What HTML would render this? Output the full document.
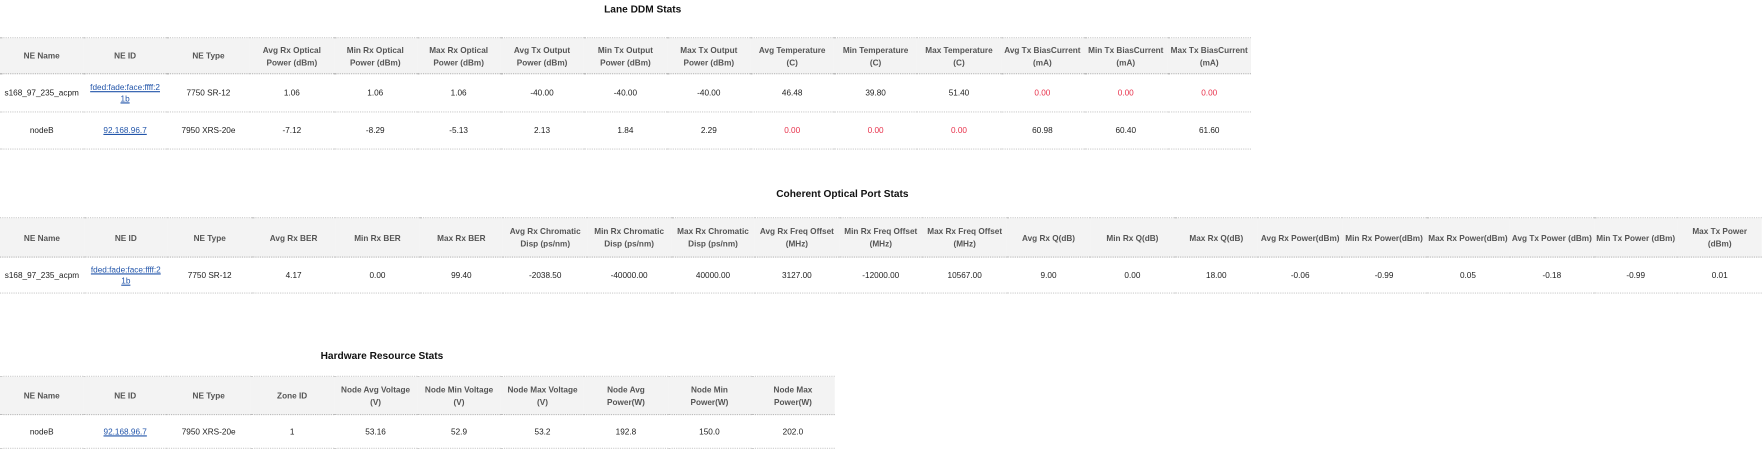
<!DOCTYPE html>
<html><head><meta charset="utf-8"><style>
body{margin:0;width:1764px;height:447px;background:#fff;font-family:"Liberation Sans",sans-serif;position:relative;overflow:hidden}
#w{position:absolute;left:0;top:0;width:1568px;height:398px;transform:scale(1.125);transform-origin:0 0}
.t{position:absolute;font-weight:bold;font-size:9px;color:#111}
table{position:absolute;border-collapse:collapse;table-layout:fixed;left:0}
th{background:#f3f3f3;color:#555;font-size:7.3px;font-weight:bold;text-align:center;line-height:11px;border-top:1px dotted #ccc;border-bottom:1px dotted #bbb;padding:0 1px}
td{font-size:7.3px;color:#222;text-align:center;border-bottom:1px dotted #ccc;line-height:10px;padding:0 1px}
td.r{color:#e8304a}
a{color:#2255aa;text-decoration:underline}
</style></head><body><div id="w">
<div class="t" style="left:537px;top:3px">Lane DDM Stats</div>
<table style="top:33px;width:1112px">
<tr style="height:32px"><th>NE Name</th><th>NE ID</th><th>NE Type</th><th>Avg Rx Optical Power (dBm)</th><th>Min Rx Optical Power (dBm)</th><th>Max Rx Optical Power (dBm)</th><th>Avg Tx Output Power (dBm)</th><th>Min Tx Output Power (dBm)</th><th>Max Tx Output Power (dBm)</th><th>Avg Temperature<br>(C)</th><th>Min Temperature<br>(C)</th><th>Max Temperature<br>(C)</th><th>Avg Tx BiasCurrent (mA)</th><th>Min Tx BiasCurrent (mA)</th><th>Max Tx BiasCurrent (mA)</th></tr>
<tr style="height:34px"><td>s168_97_235_acpm</td><td><a>fded:fade:face:ffff:2<br>1b</a></td><td>7750 SR-12</td><td>1.06</td><td>1.06</td><td>1.06</td><td>-40.00</td><td>-40.00</td><td>-40.00</td><td>46.48</td><td>39.80</td><td>51.40</td><td class="r">0.00</td><td class="r">0.00</td><td class="r">0.00</td></tr>
<tr style="height:33px"><td>nodeB</td><td><a>92.168.96.7</a></td><td>7950 XRS-20e</td><td>-7.12</td><td>-8.29</td><td>-5.13</td><td>2.13</td><td>1.84</td><td>2.29</td><td class="r">0.00</td><td class="r">0.00</td><td class="r">0.00</td><td>60.98</td><td>60.40</td><td>61.60</td></tr>
</table>
<div class="t" style="left:690px;top:167px">Coherent Optical Port Stats</div>
<table style="top:193px;width:1566px">
<tr style="height:35px"><th>NE Name</th><th>NE ID</th><th>NE Type</th><th>Avg Rx BER</th><th>Min Rx BER</th><th>Max Rx BER</th><th>Avg Rx Chromatic Disp (ps/nm)</th><th>Min Rx Chromatic Disp (ps/nm)</th><th>Max Rx Chromatic Disp (ps/nm)</th><th>Avg Rx Freq Offset (MHz)</th><th>Min Rx Freq Offset (MHz)</th><th>Max Rx Freq Offset (MHz)</th><th>Avg Rx Q(dB)</th><th>Min Rx Q(dB)</th><th>Max Rx Q(dB)</th><th>Avg Rx Power(dBm)</th><th>Min Rx Power(dBm)</th><th>Max Rx Power(dBm)</th><th>Avg Tx Power (dBm)</th><th>Min Tx Power (dBm)</th><th>Max Tx Power<br>(dBm)</th></tr>
<tr style="height:32px"><td>s168_97_235_acpm</td><td><a>fded:fade:face:ffff:2<br>1b</a></td><td>7750 SR-12</td><td>4.17</td><td>0.00</td><td>99.40</td><td>-2038.50</td><td>-40000.00</td><td>40000.00</td><td>3127.00</td><td>-12000.00</td><td>10567.00</td><td>9.00</td><td>0.00</td><td>18.00</td><td>-0.06</td><td>-0.99</td><td>0.05</td><td>-0.18</td><td>-0.99</td><td>0.01</td></tr>
</table>
<div class="t" style="left:285px;top:311px">Hardware Resource Stats</div>
<table style="top:334px;width:742px">
<tr style="height:34px"><th>NE Name</th><th>NE ID</th><th>NE Type</th><th>Zone ID</th><th>Node Avg Voltage (V)</th><th>Node Min Voltage (V)</th><th>Node Max Voltage (V)</th><th>Node Avg<br>Power(W)</th><th>Node Min<br>Power(W)</th><th>Node Max<br>Power(W)</th></tr>
<tr style="height:30px"><td>nodeB</td><td><a>92.168.96.7</a></td><td>7950 XRS-20e</td><td>1</td><td>53.16</td><td>52.9</td><td>53.2</td><td>192.8</td><td>150.0</td><td>202.0</td></tr>
</table>
</div></body></html>
